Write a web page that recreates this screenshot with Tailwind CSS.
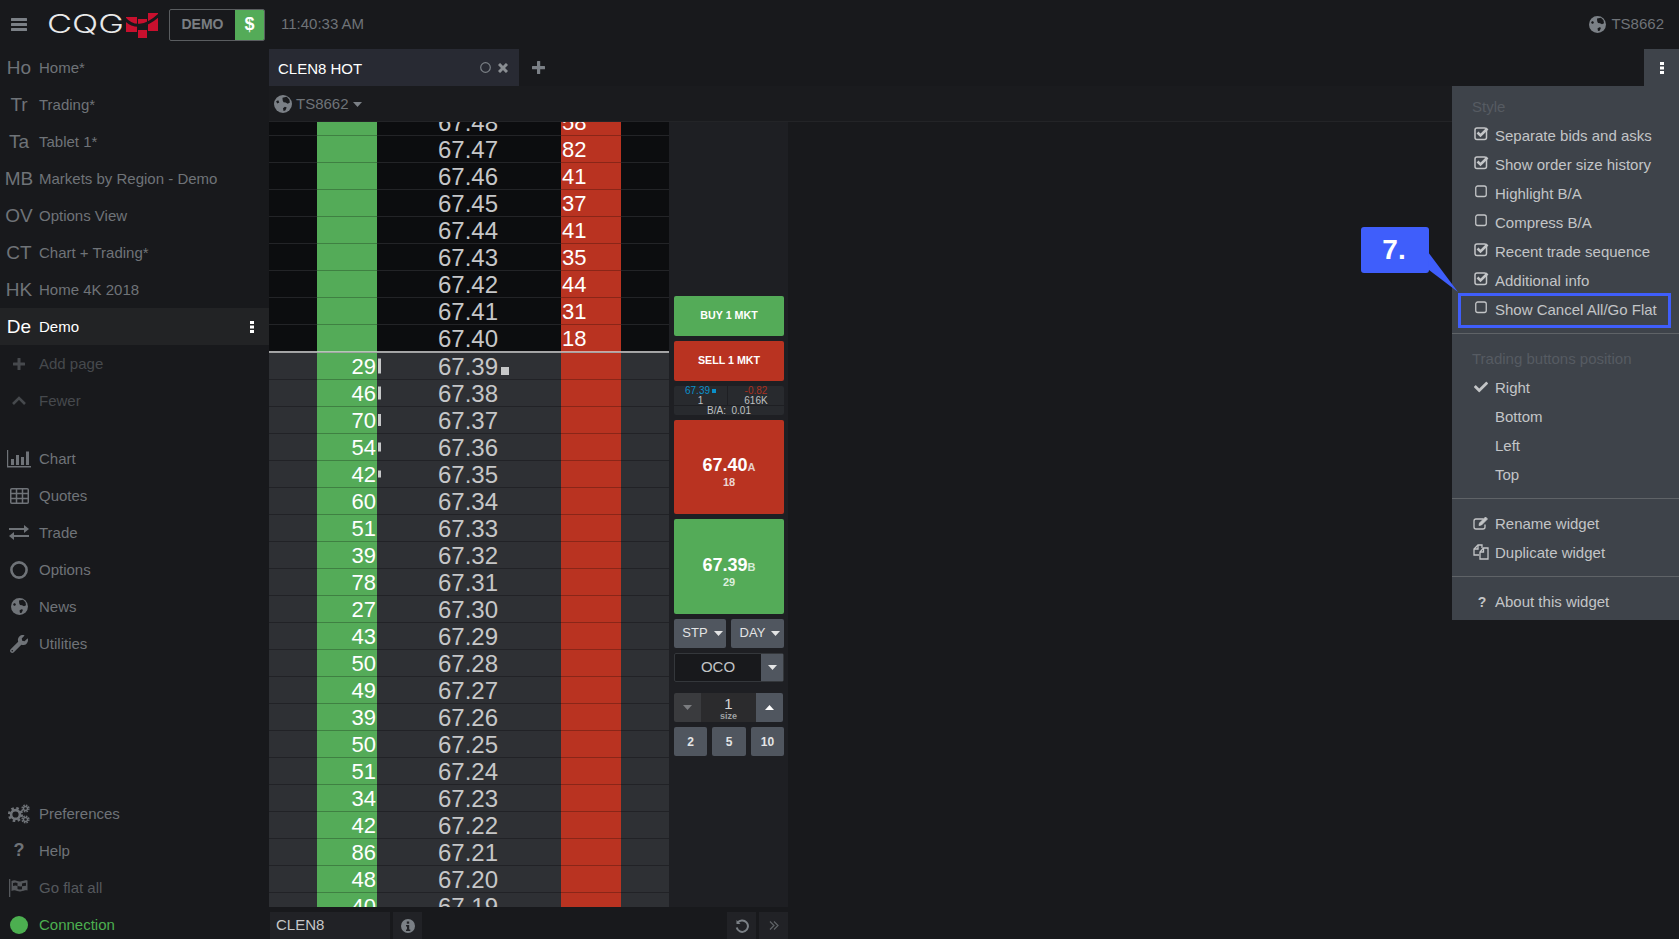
<!DOCTYPE html>
<html lang="en">
  <head>
    <meta charset="UTF-8" />
    <title>CQG Desktop</title>
    <script src="https://cdn.jsdelivr.net/npm/@tailwindcss/browser@4"></script>
  </head>
  <body class="bg-[#18191c] font-['Liberation_Sans',Arial,sans-serif] text-[15px] text-[#6f7378]">
    <div class="relative w-[1679px] h-[939px] overflow-hidden flex flex-col">
      <!-- top bar -->
      <header class="h-[49px] flex items-center shrink-0">
        <svg class="ml-[11px] w-[16px] h-[13px]" viewBox="0 0 16 13" fill="#7b8086"><rect width="16" height="3" rx="0.5"/><rect y="5" width="16" height="3" rx="0.5"/><rect y="10" width="16" height="3" rx="0.5"/></svg>
        <div class="ml-[20px] w-[78px] text-[25px] leading-[25px] font-light font-['Inter',sans-serif] text-[#e9e9e9] scale-x-[1.38] origin-left">CQG</div>
        <svg class="w-[34px] h-[26px]" viewBox="0 0 34 26" fill="#c8102e">
          <rect x="1" y="5" width="11" height="15"/><rect x="13" y="7" width="9" height="6"/><rect x="13" y="18" width="9" height="11"/><rect x="23" y="1" width="10" height="18"/>
          <path d="M-1 6Q13 22 34 3" fill="none" stroke="#18191c" stroke-width="3"/>
        </svg>
        <div class="ml-[10px] h-[32px] w-[96px] flex border border-[#5a5d60] rounded-[2px] overflow-hidden">
          <span class="flex-1 flex items-center justify-center font-bold text-[14px] text-[#7a7e82]">DEMO</span>
          <span class="w-[29px] flex items-center justify-center bg-[#54ab58] text-white font-bold text-[18px]">$</span>
        </div>
        <span class="ml-[16px]">11:40:33 AM</span>
        <svg class="ml-auto w-[17px] h-[17px]" viewBox="0 0 17 17"><circle cx="8.500" cy="8.500" r="8.500" fill="#7b8086"/><path d="M8 2.500l4-.8 2.500 2.500.5 3-2 1-2-1-2-.3-.8-1.700zM8.500 12.500l1.800-1.300 1.700.5-1.300 3-1.700.3zM2 6l2-1 1 2-2 1z" fill="#18191c"/></svg>
        <span class="ml-[5px] mr-[15px]">TS8662</span>
      </header>

      <div class="flex flex-1 min-h-0">
        <!-- sidebar -->
        <nav class="w-[269px] shrink-0 flex flex-col">
          <a class="h-[37px] shrink-0 flex items-center"><span class="w-[38px] mt-[2px] text-center text-[19px]">Ho</span><span class="ml-px mt-[2px]">Home*</span></a>
          <a class="h-[37px] shrink-0 flex items-center"><span class="w-[38px] mt-[2px] text-center text-[19px]">Tr</span><span class="ml-px mt-[2px]">Trading*</span></a>
          <a class="h-[37px] shrink-0 flex items-center"><span class="w-[38px] mt-[2px] text-center text-[19px]">Ta</span><span class="ml-px mt-[2px]">Tablet 1*</span></a>
          <a class="h-[37px] shrink-0 flex items-center"><span class="w-[38px] mt-[2px] text-center text-[19px]">MB</span><span class="ml-px mt-[2px]">Markets by Region - Demo</span></a>
          <a class="h-[37px] shrink-0 flex items-center"><span class="w-[38px] mt-[2px] text-center text-[19px]">OV</span><span class="ml-px mt-[2px]">Options View</span></a>
          <a class="h-[37px] shrink-0 flex items-center"><span class="w-[38px] mt-[2px] text-center text-[19px]">CT</span><span class="ml-px mt-[2px]">Chart + Trading*</span></a>
          <a class="h-[37px] shrink-0 flex items-center"><span class="w-[38px] mt-[2px] text-center text-[19px]">HK</span><span class="ml-px mt-[2px]">Home 4K 2018</span></a>
          <a class="h-[37px] shrink-0 flex items-center bg-[#222325] text-white"><span class="w-[38px] mt-[2px] text-center text-[19px]">De</span><span class="ml-px mt-[2px]">Demo</span>
            <svg class="ml-auto mr-[15px] w-[4px] h-[12px]" viewBox="0 0 4 12" fill="#fff"><rect width="4" height="3"/><rect y="4.500" width="4" height="3"/><rect y="9" width="4" height="3"/></svg>
          </a>
          <a class="h-[37px] shrink-0 flex items-center text-[#46494d]"><span class="w-[38px] flex justify-center"><svg class="w-[12px] h-[12px]" viewBox="0 0 12 12" fill="#46494d"><rect x="4.500" width="3" height="12" rx="0.5"/><rect y="4.500" width="12" height="3" rx="0.5"/></svg></span><span class="ml-px mt-[2px]">Add page</span></a>
          <a class="h-[37px] shrink-0 flex items-center text-[#46494d]"><span class="w-[38px] flex justify-center"><svg class="w-[14px] h-[9px]" viewBox="0 0 14 9" fill="none" stroke="#46494d" stroke-width="2.600"><path d="M1 8l6-6 6 6"/></svg></span><span class="ml-px mt-[2px]">Fewer</span></a>

          <div class="h-[21px] shrink-0"></div>

          <a class="h-[37px] shrink-0 flex items-center"><span class="w-[38px] flex justify-center"><svg class="w-[24px] h-[18px]" viewBox="0 0 24 18" fill="#6f7378"><path d="M0 0h1.200v16H24v1.400H0z"/><rect x="4" y="9" width="3" height="6"/><rect x="9" y="5" width="3" height="10"/><rect x="14" y="7" width="3" height="8"/><rect x="19" y="1.500" width="3" height="13.500"/></svg></span><span class="ml-px mt-[2px]">Chart</span></a>
          <a class="h-[37px] shrink-0 flex items-center"><span class="w-[38px] flex justify-center"><svg class="w-[19px] h-[16px]" viewBox="0 0 19 16" fill="none" stroke="#6f7378" stroke-width="1.500"><rect x="0.750" y="0.750" width="17.500" height="14.500" rx="1"/><path d="M1 5.500h17M1 10.500h17M6.500 1v14M12.500 1v14"/></svg></span><span class="ml-px mt-[2px]">Quotes</span></a>
          <a class="h-[37px] shrink-0 flex items-center"><span class="w-[38px] flex justify-center"><svg class="w-[20px] h-[15px]" viewBox="0 0 20 15" fill="#6f7378"><path d="M0 3h15V0l5 4-5 4V5H0zM20 10H5V7l-5 4 5 4v-3h15z"/></svg></span><span class="ml-px mt-[2px]">Trade</span></a>
          <a class="h-[37px] shrink-0 flex items-center"><span class="w-[38px] flex justify-center"><svg class="w-[18px] h-[18px]" viewBox="0 0 18 18" fill="none" stroke="#6f7378" stroke-width="2.600"><circle cx="9" cy="9" r="7.600"/></svg></span><span class="ml-px mt-[2px]">Options</span></a>
          <a class="h-[37px] shrink-0 flex items-center"><span class="w-[38px] flex justify-center"><svg class="w-[17px] h-[17px]" viewBox="0 0 17 17"><circle cx="8.500" cy="8.500" r="8.500" fill="#6f7378"/><path d="M8 2.500l4-.8 2.500 2.500.5 3-2 1-2-1-2-.3-.8-1.700zM8.500 12.500l1.800-1.300 1.700.5-1.300 3-1.700.3zM2 6l2-1 1 2-2 1z" fill="#18191c"/></svg></span><span class="ml-px mt-[2px]">News</span></a>
          <a class="h-[37px] shrink-0 flex items-center"><span class="w-[38px] flex justify-center"><svg class="w-[18px] h-[18px]" viewBox="0 0 512 512" fill="#6f7378"><path d="M507.73 109.1c-2.24-9.03-13.54-12.09-20.12-5.51l-74.36 74.36-67.88-11.31-11.31-67.88 74.36-74.36c6.62-6.62 3.43-17.9-5.66-20.16-47.38-11.74-99.55.91-136.58 37.93-39.64 39.64-50.55 97.1-34.05 147.2L18.74 402.76c-24.99 24.99-24.99 65.51 0 90.5 24.99 24.99 65.51 24.99 90.5 0l213.21-213.21c50.12 16.71 107.47 5.68 147.37-34.22 37.07-37.07 49.7-89.32 37.91-136.73zM64 472c-13.25 0-24-10.75-24-24 0-13.26 10.75-24 24-24s24 10.74 24 24c0 13.25-10.75 24-24 24z"/></svg></span><span class="ml-px mt-[2px]">Utilities</span></a>

          <div class="h-[133px] shrink-0"></div>

          <a class="h-[37px] flex items-center shrink-0"><span class="w-[38px] flex justify-center"><svg class="w-[22px] h-[20px]" viewBox="0 0 22 20" fill="none" stroke="#6f7378"><circle cx="7.500" cy="10.500" r="4.400" stroke-width="2.600"/><circle cx="7.500" cy="10.500" r="6.300" stroke-width="2.600" stroke-dasharray="2.500 2.450"/><circle cx="17.500" cy="4.500" r="2" stroke-width="1.400"/><circle cx="17.500" cy="4.500" r="3.400" stroke-width="1.400" stroke-dasharray="1.600 1.070"/><circle cx="17.500" cy="15.500" r="2" stroke-width="1.400"/><circle cx="17.500" cy="15.500" r="3.400" stroke-width="1.400" stroke-dasharray="1.600 1.070"/></svg></span><span class="ml-px mt-[2px]">Preferences</span></a>
          <a class="h-[37px] flex items-center shrink-0"><span class="w-[38px] text-center font-bold text-[18px]">?</span><span class="ml-px mt-[2px]">Help</span></a>
          <a class="h-[37px] flex items-center shrink-0 text-[#55585c]"><span class="w-[38px] flex justify-center"><svg class="w-[20px] h-[18px]" viewBox="0 0 20 18" fill="#55585c"><rect y="0" width="1.300" height="18"/><path d="M2.500 2c4-2 6 1 9 .5s5-1.500 7-1v10c-2-.5-4 .5-7 1s-5-2.500-9-.5zM4 4v3c2-.8 3-.6 4.500 0v3c1.500.6 3 .6 4.500.3V7.300c1.500-.3 2.500-.6 4-.6V3.800c-1.500 0-2.500.3-4 .6v2.900c-1.500.3-3 .2-4.500-.3V4C7 3.300 6 3.200 4 4z" fill-rule="evenodd"/></svg></span><span class="ml-px mt-[2px]">Go flat all</span></a>
          <a class="h-[37px] flex items-center shrink-0 text-[#4caf50]"><span class="w-[38px] flex justify-center"><span class="w-[18px] h-[18px] rounded-full bg-[#4caf50]"></span></span><span class="ml-px mt-[2px]">Connection</span></a>
        </nav>

        <!-- widget -->
        <main class="flex-1 flex flex-col min-w-0">
          <div class="h-[37px] flex items-center shrink-0">
            <div class="w-[250px] h-full bg-[#282a33] flex items-center pl-[9px] text-white">
              <span class="mt-[3px]">CLEN8 HOT</span>
              <svg class="ml-auto w-[11px] h-[11px]" viewBox="0 0 11 11" fill="none" stroke="#7b8086" stroke-width="1.200"><circle cx="5.500" cy="5.500" r="4.800"/></svg>
              <svg class="ml-[7px] mr-[11px] w-[10px] h-[10px]" viewBox="0 0 10 10" fill="none" stroke="#8a8e93" stroke-width="3"><path d="M1 1l8 8M9 1l-8 8"/></svg>
            </div>
            <svg class="ml-[13px] w-[13px] h-[13px]" viewBox="0 0 13 13" fill="#7b8086"><rect x="5" width="3.200" height="13" rx="0.5"/><rect y="5" width="13" height="3.200" rx="0.5"/></svg>
          </div>
          <div class="h-[36px] flex items-center pl-[5px] pt-px shrink-0 bg-[#1a1b1e] border-b border-[#232427]">
            <svg class="w-[18px] h-[18px]" viewBox="0 0 17 17"><circle cx="8.500" cy="8.500" r="8.500" fill="#7b8086"/><path d="M8 2.500l4-.8 2.500 2.500.5 3-2 1-2-1-2-.3-.8-1.700zM8.500 12.500l1.800-1.300 1.700.5-1.300 3-1.700.3zM2 6l2-1 1 2-2 1z" fill="#1a1b1e"/></svg>
            <span class="ml-[4px]">TS8662</span>
            <svg class="ml-[4px] w-[9px] h-[5px]" viewBox="0 0 9 5" fill="#7b8086"><path d="M0 0h9L4.500 5z"/></svg>
          </div>

          <div class="flex h-[785px] shrink-0">
            <!-- ladder rows come from the script below -->
            <div class="w-[400px] overflow-hidden">
              <div id="ladder" class="-mt-[13px]"></div>
            </div>

            <!-- order panel -->
            <aside class="w-[119px] bg-[#1e1f23] pt-[174px] pl-[5px] pr-[4px] flex flex-col gap-[5px]">
              <button class="h-[40px] pb-[2px] rounded-[2px] bg-[#54ab58] text-white font-bold text-[10.7px]">BUY 1 MKT</button>
              <button class="h-[40px] pb-[2px] rounded-[2px] bg-[#b93321] text-white font-bold text-[10.7px]">SELL 1 MKT</button>
              <div class="h-[29px] rounded-[2px] bg-[#282a2e] flex flex-col text-[10px] leading-[10px] text-[#bfc0c1]">
                <div class="flex h-[20px] border-b border-[#1e1f23]">
                  <div class="w-[54px] text-center border-r border-[#1e1f23]"><div class="text-[#0a8fc9] flex justify-center items-center gap-[2px]">67.39<span class="w-[4px] h-[4px] bg-[#0a8fc9]"></span></div><div>1</div></div>
                  <div class="flex-1 text-center"><div class="text-[#a8301f]">-0.82</div><div>616K</div></div>
                </div>
                <div class="flex-1 flex items-center justify-center">B/A:&nbsp; 0.01</div>
              </div>
              <button class="h-[94px] pt-[9px] rounded-[2px] bg-[#b93321] text-white flex flex-col items-center justify-center font-bold">
                <span class="text-[18px] leading-[18px]">67.40<span class="text-[11px] text-[#e6cfca]">A</span></span>
                <span class="text-[11px] leading-[12px] text-[#ecd6d2]">18</span>
              </button>
              <button class="h-[95px] pt-[10px] rounded-[2px] bg-[#54ab58] text-white flex flex-col items-center justify-center font-bold">
                <span class="text-[18px] leading-[18px]">67.39<span class="text-[11px] text-[#d6ecd7]">B</span></span>
                <span class="text-[11px] leading-[12px] text-[#dcefdd]">29</span>
              </button>
              <div class="h-[29px] flex gap-[5px]">
                <button class="w-[52px] pl-[5px] pb-px rounded-[2px] bg-[#50565f] text-[13px] text-[#e3e4e5] flex items-center justify-center gap-[6px]">STP<svg class="w-[9px] h-[5px]" viewBox="0 0 9 5" fill="#e3e4e5"><path d="M0 0h9L4.500 5z"/></svg></button>
                <button class="flex-1 pl-[5px] pb-px rounded-[2px] bg-[#50565f] text-[13px] text-[#e3e4e5] flex items-center justify-center gap-[6px]">DAY<svg class="w-[9px] h-[5px]" viewBox="0 0 9 5" fill="#e3e4e5"><path d="M0 0h9L4.500 5z"/></svg></button>
              </div>
              <div class="h-[29px] flex rounded-[2px] border border-[#34373b] bg-[#18191c]">
                <span class="flex-1 flex items-center justify-center text-[#c3c5c7]">OCO</span>
                <span class="w-[22px] bg-[#50565f] flex items-center justify-center"><svg class="w-[9px] h-[5px]" viewBox="0 0 9 5" fill="#e3e4e5"><path d="M0 0h9L4.500 5z"/></svg></span>
              </div>
              <div class="mt-[6px] h-[29px] flex mr-px rounded-[2px] overflow-hidden">
                <span class="w-[27px] bg-[#3a3b3e] flex items-center justify-center"><svg class="w-[9px] h-[5px]" viewBox="0 0 9 5" fill="#7b7d80"><path d="M0 0h9L4.500 5z"/></svg></span>
                <span class="flex-1 pt-[3px] bg-[#2b2b2d] flex flex-col items-center justify-center text-[#d5d6d7]"><span class="text-[15px] leading-[15px]">1</span><span class="text-[9px] leading-[11px] font-bold text-[#9fa1a3]">size</span></span>
                <span class="w-[27px] bg-[#50565f] flex items-center justify-center"><svg class="w-[9px] h-[5px]" viewBox="0 0 9 5" fill="#fff"><path d="M0 5h9L4.500 0z"/></svg></span>
              </div>
              <div class="h-[29px] flex gap-[5px] font-bold text-[12px] text-[#e3e4e5]">
                <button class="w-[33px] rounded-[2px] bg-[#50565f]">2</button>
                <button class="flex-1 rounded-[2px] bg-[#50565f]">5</button>
                <button class="w-[33px] rounded-[2px] bg-[#50565f]">10</button>
              </div>
            </aside>
          </div>

          <!-- bottom bar -->
          <div class="h-[32px] w-[519px] shrink-0 pt-[5px] pl-px flex gap-[3px]">
            <div class="w-[120px] bg-[#212226] flex items-center pl-[6px] text-[#c6c7c8]">CLEN8</div>
            <div class="w-[29px] bg-[#212226] flex items-center justify-center"><svg class="w-[14px] h-[14px]" viewBox="0 0 14 14"><circle cx="7" cy="7" r="7" fill="#7b8086"/><rect x="5.800" y="2.500" width="2.400" height="2.200" fill="#212226"/><path d="M5 6h3.200v4.500H9.300V12H5v-1.500h1V7.500H5z" fill="#212226"/></svg></div>
            <div class="ml-auto w-[29px] bg-[#212226] flex items-center justify-center"><svg class="w-[14px] h-[14px]" viewBox="0 0 14 14" fill="none" stroke="#7b8086" stroke-width="2"><path d="M2.500 4a5.700 5.700 0 1 1-.8 4.500"/><path d="M1.500 1v4h4" fill="#7b8086" stroke="none"/></svg></div>
            <div class="w-[29px] bg-[#212226] flex items-center justify-center"><svg class="w-[10px] h-[9px]" viewBox="0 0 10 9" fill="none" stroke="#5f6367" stroke-width="1.200"><path d="M1 .5l4 4-4 4M5 .5l4 4-4 4"/></svg></div>
          </div>
        </main>
      </div>

      <!-- kebab + open menu -->
      <button class="absolute left-[1644px] top-[49px] w-[35px] h-[37px] bg-[#3e434a] flex items-center justify-center">
        <svg class="w-[4px] h-[12px]" viewBox="0 0 4 12" fill="#fff"><rect width="4" height="3"/><rect y="4.500" width="4" height="3"/><rect y="9" width="4" height="3"/></svg>
      </button>
      <div class="absolute left-[1452px] top-[86px] w-[227px] h-[534px] bg-[#3e434a] text-[#c3c5c7] pt-[7px]">
        <div class="h-[29px] flex items-center pl-[20px] text-[#565b62]">Style</div>
        <div class="h-[29px] flex items-center"><svg class="ml-[22px] mb-[6px] w-[15px] h-[15px]" viewBox="0 0 15 15"><rect x="1" y="2" width="11.500" height="11.500" rx="2" fill="none" stroke="#c3c5c7" stroke-width="1.500"/><path d="M3.500 6.500l3 3 7-7" fill="none" stroke="#c3c5c7" stroke-width="2.600"/></svg><span class="ml-[6px]">Separate bids and asks</span></div>
        <div class="h-[29px] flex items-center"><svg class="ml-[22px] mb-[6px] w-[15px] h-[15px]" viewBox="0 0 15 15"><rect x="1" y="2" width="11.500" height="11.500" rx="2" fill="none" stroke="#c3c5c7" stroke-width="1.500"/><path d="M3.500 6.500l3 3 7-7" fill="none" stroke="#c3c5c7" stroke-width="2.600"/></svg><span class="ml-[6px]">Show order size history</span></div>
        <div class="h-[29px] flex items-center"><svg class="ml-[22px] mb-[6px] w-[15px] h-[15px]" viewBox="0 0 15 15"><rect x="1.750" y="2" width="10.500" height="10.500" rx="2" fill="none" stroke="#c3c5c7" stroke-width="1.300"/></svg><span class="ml-[6px]">Highlight B/A</span></div>
        <div class="h-[29px] flex items-center"><svg class="ml-[22px] mb-[6px] w-[15px] h-[15px]" viewBox="0 0 15 15"><rect x="1.750" y="2" width="10.500" height="10.500" rx="2" fill="none" stroke="#c3c5c7" stroke-width="1.300"/></svg><span class="ml-[6px]">Compress B/A</span></div>
        <div class="h-[29px] flex items-center"><svg class="ml-[22px] mb-[6px] w-[15px] h-[15px]" viewBox="0 0 15 15"><rect x="1" y="2" width="11.500" height="11.500" rx="2" fill="none" stroke="#c3c5c7" stroke-width="1.500"/><path d="M3.500 6.500l3 3 7-7" fill="none" stroke="#c3c5c7" stroke-width="2.600"/></svg><span class="ml-[6px]">Recent trade sequence</span></div>
        <div class="h-[29px] flex items-center"><svg class="ml-[22px] mb-[6px] w-[15px] h-[15px]" viewBox="0 0 15 15"><rect x="1" y="2" width="11.500" height="11.500" rx="2" fill="none" stroke="#c3c5c7" stroke-width="1.500"/><path d="M3.500 6.500l3 3 7-7" fill="none" stroke="#c3c5c7" stroke-width="2.600"/></svg><span class="ml-[6px]">Additional info</span></div>
        <div class="relative h-[29px] flex items-center"><svg class="ml-[22px] mb-[6px] w-[15px] h-[15px]" viewBox="0 0 15 15"><rect x="1.750" y="2" width="10.500" height="10.500" rx="2" fill="none" stroke="#c3c5c7" stroke-width="1.300"/></svg><span class="ml-[6px]">Show Cancel All/Go Flat</span>
          <div class="absolute -top-[3px] -bottom-[3px] left-[6px] right-[8px] border-[3px] border-[#3f5efb]"></div>
        </div>
        <div class="mt-[8px] mb-[11px] h-px bg-[#5f6367]"></div>
        <div class="h-[29px] flex items-center pl-[20px] text-[#565b62]">Trading buttons position</div>
        <div class="h-[29px] flex items-center"><svg class="ml-[22px] mb-[3px] w-[14px] h-[14px]" viewBox="0 0 512 512" fill="#c3c5c7"><path d="M173.898 439.404l-166.4-166.4c-9.997-9.997-9.997-26.206 0-36.204l36.203-36.204c9.997-9.998 26.207-9.998 36.204 0L192 312.69 432.095 72.596c9.997-9.997 26.207-9.997 36.204 0l36.203 36.204c9.997 9.997 9.997 26.206 0 36.204l-294.4 294.401c-9.998 9.997-26.207 9.997-36.204-.001z"/></svg><span class="ml-[7px]">Right</span></div>
        <div class="h-[29px] flex items-center pl-[43px]">Bottom</div>
        <div class="h-[29px] flex items-center pl-[43px]">Left</div>
        <div class="h-[29px] flex items-center pl-[43px]">Top</div>
        <div class="mt-[8px] mb-[11px] h-px bg-[#5f6367]"></div>
        <div class="h-[29px] flex items-center"><svg class="ml-[21px] mb-[3px] w-[16px] h-[14px]" viewBox="0 0 16 14" fill="none" stroke="#c3c5c7"><path d="M10.500 3H3a2 2 0 0 0-2 2v6a2 2 0 0 0 2 2h7a2 2 0 0 0 2-2V8.500" stroke-width="1.300"/><path d="M6 9.500l.5-2.500 6-6 2 2-6 6z" fill="#c3c5c7" stroke-width="0.800"/></svg><span class="ml-[6px]">Rename widget</span></div>
        <div class="h-[29px] flex items-center"><svg class="ml-[21px] mb-[3px] w-[16px] h-[16px]" viewBox="0 0 16 16" fill="none" stroke="#c3c5c7" stroke-width="1.300"><path d="M6 11H1V5l4-4h4v3"/><path d="M5 1v4H1"/><path d="M7 15V8l3.500-4H15v11z"/><path d="M10.500 4v4H7"/></svg><span class="ml-[6px]">Duplicate widget</span></div>
        <div class="mt-[8px] mb-[11px] h-px bg-[#5f6367]"></div>
        <div class="h-[29px] flex items-center"><span class="w-[43px] pl-[17px] text-center font-bold text-[14px]">?</span>About this widget</div>
      </div>

      <!-- tutorial callout -->
      <div class="absolute left-[1361px] top-[227px] w-[68px] h-[46px] pr-[2px] pb-px rounded-[3px] bg-[#3f5efb] text-white font-bold text-[28px] flex items-center justify-center">7.</div>
      <svg class="absolute left-[1428px] top-[252px] w-[31px] h-[41px]" viewBox="0 0 31 41" fill="#3f5efb"><polygon points="0,0 1,18 30,40"/></svg>
    </div>

    <script>
      const asks = [
        ["67.48", 58], ["67.47", 82], ["67.46", 41], ["67.45", 37], ["67.44", 41],
        ["67.43", 35], ["67.42", 44], ["67.41", 31], ["67.40", 18],
      ];
      const bids = [
        ["67.39", 29, 15], ["67.38", 46, 13], ["67.37", 70, 12], ["67.36", 54, 9], ["67.35", 42, 7],
        ["67.34", 60], ["67.33", 51], ["67.32", 39], ["67.31", 78], ["67.30", 27],
        ["67.29", 43], ["67.28", 50], ["67.27", 49], ["67.26", 39], ["67.25", 50],
        ["67.24", 51], ["67.23", 34], ["67.22", 42], ["67.21", 86], ["67.20", 48], ["67.19", 40],
      ];

      let html = "";
      asks.forEach(([price, size]) => {
        html += `
          <div class="grid grid-cols-[48px_60px_184px_60px_48px] grid-rows-[27px] h-[27px]">
            <div class="bg-[#0c0d0f] border-b border-[#232427]"></div>
            <div class="bg-[#54ab58] border-b border-black/25"></div>
            <div class="bg-[#0c0d0f] border-b border-[#232427] pr-[2px] text-center text-[24px] leading-[28px] text-[#c6c7c8]">${price}</div>
            <div class="bg-[#b93321] border-b border-black/25 pl-[1px] text-[22px] leading-[28px] text-white">${size}</div>
            <div class="bg-[#0c0d0f] border-b border-[#232427]"></div>
          </div>`;
      });
      html += `<div class="relative z-10 -mt-px h-[2px] bg-white/60"></div>`;
      bids.forEach(([price, size, bar], i) => {
        html += `
          <div class="grid grid-cols-[48px_60px_184px_60px_48px] grid-rows-[27px] h-[27px]">
            <div class="bg-[#2e3034] border-b border-[#212226]"></div>
            <div class="bg-[#54ab58] border-b border-black/25 pr-[1px] text-right text-[22px] leading-[28px] text-white">${size}</div>
            <div class="relative bg-[#2e3034] border-b border-[#212226] pr-[2px] text-center text-[24px] leading-[28px] text-[#c6c7c8]">${price}
              ${bar ? `<span class="absolute left-px top-1/2 -translate-y-1/2 w-[3px] bg-[#c6c7c8]" style="height:${bar}px"></span>` : ""}
              ${i === 0 ? `<span class="absolute left-[124px] top-[14px] w-[8px] h-[8px] bg-[#c6c7c8]"></span>` : ""}
            </div>
            <div class="bg-[#b93321] border-b border-black/25"></div>
            <div class="bg-[#2e3034] border-b border-[#212226]"></div>
          </div>`;
      });
      document.getElementById("ladder").innerHTML = html;
    </script>
  </body>
</html>
